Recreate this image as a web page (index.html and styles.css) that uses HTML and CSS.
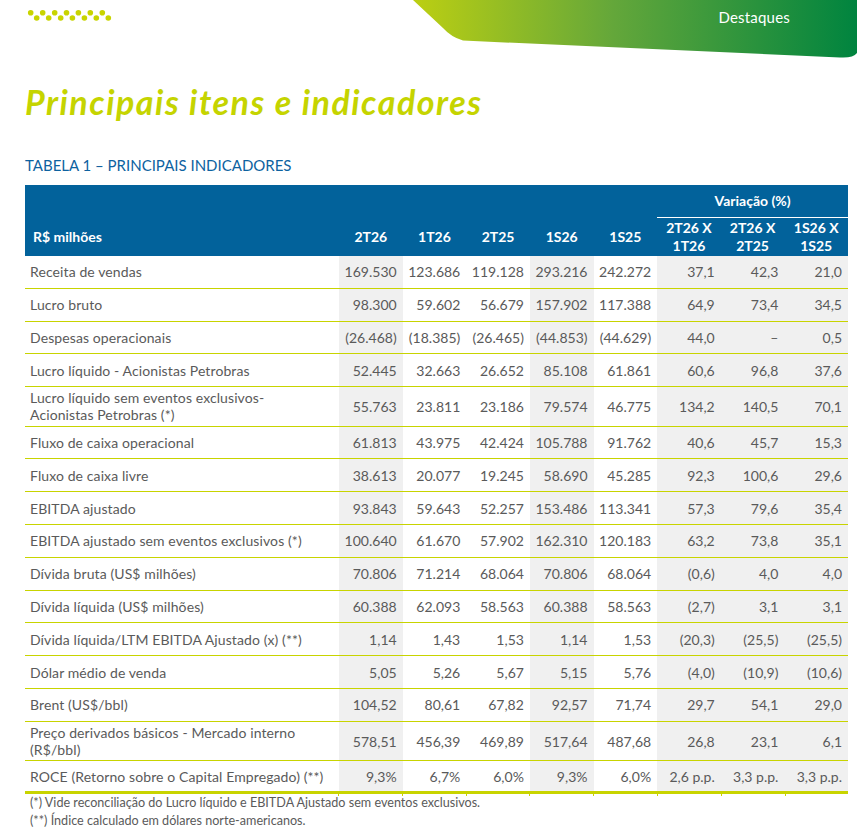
FILE: index.html
```html
<!DOCTYPE html>
<html lang="pt-BR">
<head>
<meta charset="utf-8">
<title>Principais itens e indicadores</title>
<link rel="stylesheet" href="styles.css">
</head>
<body>
<header class="top">
  <svg class="dots" width="112" height="24" viewBox="0 0 112 24" aria-hidden="true">
    <g fill="#c8d400">
      <circle cx="30.7" cy="12.7" r="2.8"/><circle cx="42.7" cy="12.7" r="2.8"/><circle cx="54.7" cy="12.7" r="2.8"/><circle cx="66.5" cy="12.7" r="2.8"/><circle cx="78.4" cy="12.7" r="2.8"/><circle cx="90.3" cy="12.7" r="2.8"/><circle cx="102.3" cy="12.7" r="2.8"/>
      <circle cx="36.7" cy="18" r="2.8"/><circle cx="48.7" cy="18" r="2.8"/><circle cx="60.7" cy="18" r="2.8"/><circle cx="72.4" cy="18" r="2.8"/><circle cx="84.4" cy="18" r="2.8"/><circle cx="96.3" cy="18" r="2.8"/><circle cx="108.3" cy="18" r="2.8"/>
    </g>
  </svg>
  <div class="banner">
    <svg class="banner-shape" width="444" height="60" viewBox="0 0 444 60" aria-hidden="true">
      <defs>
        <linearGradient id="bg" x1="0" y1="0" x2="1" y2="0">
          <stop offset="0" stop-color="#bccf12"/>
          <stop offset="0.45" stop-color="#64a73a"/>
          <stop offset="1" stop-color="#00843f"/>
        </linearGradient>
      </defs>
      <path d="M0,0 L30,28 Q38,37 50,40.6 L427,57.4 Q440,58.2 444,53 L444,0 Z" fill="url(#bg)"/>
    </svg>
    <span class="banner-label">Destaques</span>
  </div>
</header>
<main class="page">
  <h1 class="title">Principais itens e indicadores</h1>
  <h2 class="table-title">TABELA 1 – PRINCIPAIS INDICADORES</h2>
  <table class="ind">
    <colgroup>
      <col class="c-label"><col><col><col><col><col><col><col><col>
    </colgroup>
    <thead>
      <tr class="h1">
        <th rowspan="2" class="h-label">R$ milhões</th>
        <th rowspan="2" class="h-per">2T26</th>
        <th rowspan="2" class="h-per">1T26</th>
        <th rowspan="2" class="h-per">2T25</th>
        <th rowspan="2" class="h-per">1S26</th>
        <th rowspan="2" class="h-per">1S25</th>
        <th colspan="3" class="h-var">Variação (%)</th>
      </tr>
      <tr class="h2">
        <th>2T26 X<br>1T26</th>
        <th>2T26 X<br>2T25</th>
        <th>1S26 X<br>1S25</th>
      </tr>
    </thead>
    <tbody>
      <tr><td class="lbl">Receita de vendas</td><td class="g">169.530</td><td>123.686</td><td>119.128</td><td class="g">293.216</td><td>242.272</td><td class="g">37,1</td><td class="g">42,3</td><td class="g">21,0</td></tr>
      <tr><td class="lbl">Lucro bruto</td><td class="g">98.300</td><td>59.602</td><td>56.679</td><td class="g">157.902</td><td>117.388</td><td class="g">64,9</td><td class="g">73,4</td><td class="g">34,5</td></tr>
      <tr><td class="lbl">Despesas operacionais</td><td class="g">(26.468)</td><td>(18.385)</td><td>(26.465)</td><td class="g">(44.853)</td><td>(44.629)</td><td class="g">44,0</td><td class="g">–</td><td class="g">0,5</td></tr>
      <tr><td class="lbl">Lucro líquido - Acionistas Petrobras</td><td class="g">52.445</td><td>32.663</td><td>26.652</td><td class="g">85.108</td><td>61.861</td><td class="g">60,6</td><td class="g">96,8</td><td class="g">37,6</td></tr>
      <tr class="two"><td class="lbl">Lucro líquido sem eventos exclusivos-<br>Acionistas Petrobras (*)</td><td class="g">55.763</td><td>23.811</td><td>23.186</td><td class="g">79.574</td><td>46.775</td><td class="g">134,2</td><td class="g">140,5</td><td class="g">70,1</td></tr>
      <tr><td class="lbl">Fluxo de caixa operacional</td><td class="g">61.813</td><td>43.975</td><td>42.424</td><td class="g">105.788</td><td>91.762</td><td class="g">40,6</td><td class="g">45,7</td><td class="g">15,3</td></tr>
      <tr><td class="lbl">Fluxo de caixa livre</td><td class="g">38.613</td><td>20.077</td><td>19.245</td><td class="g">58.690</td><td>45.285</td><td class="g">92,3</td><td class="g">100,6</td><td class="g">29,6</td></tr>
      <tr><td class="lbl">EBITDA ajustado</td><td class="g">93.843</td><td>59.643</td><td>52.257</td><td class="g">153.486</td><td>113.341</td><td class="g">57,3</td><td class="g">79,6</td><td class="g">35,4</td></tr>
      <tr><td class="lbl">EBITDA ajustado sem eventos exclusivos (*)</td><td class="g">100.640</td><td>61.670</td><td>57.902</td><td class="g">162.310</td><td>120.183</td><td class="g">63,2</td><td class="g">73,8</td><td class="g">35,1</td></tr>
      <tr><td class="lbl">Dívida bruta (US$ milhões)</td><td class="g">70.806</td><td>71.214</td><td>68.064</td><td class="g">70.806</td><td>68.064</td><td class="g">(0,6)</td><td class="g">4,0</td><td class="g">4,0</td></tr>
      <tr><td class="lbl">Dívida líquida (US$ milhões)</td><td class="g">60.388</td><td>62.093</td><td>58.563</td><td class="g">60.388</td><td>58.563</td><td class="g">(2,7)</td><td class="g">3,1</td><td class="g">3,1</td></tr>
      <tr><td class="lbl">Dívida líquida/LTM EBITDA Ajustado (x) (**)</td><td class="g">1,14</td><td>1,43</td><td>1,53</td><td class="g">1,14</td><td>1,53</td><td class="g">(20,3)</td><td class="g">(25,5)</td><td class="g">(25,5)</td></tr>
      <tr><td class="lbl">Dólar médio de venda</td><td class="g">5,05</td><td>5,26</td><td>5,67</td><td class="g">5,15</td><td>5,76</td><td class="g">(4,0)</td><td class="g">(10,9)</td><td class="g">(10,6)</td></tr>
      <tr><td class="lbl">Brent (US$/bbl)</td><td class="g">104,52</td><td>80,61</td><td>67,82</td><td class="g">92,57</td><td>71,74</td><td class="g">29,7</td><td class="g">54,1</td><td class="g">29,0</td></tr>
      <tr class="two"><td class="lbl">Preço derivados básicos - Mercado interno<br>(R$/bbl)</td><td class="g">578,51</td><td>456,39</td><td>469,89</td><td class="g">517,64</td><td>487,68</td><td class="g">26,8</td><td class="g">23,1</td><td class="g">6,1</td></tr>
      <tr class="last"><td class="lbl">ROCE (Retorno sobre o Capital Empregado) (**)</td><td class="g">9,3%</td><td>6,7%</td><td>6,0%</td><td class="g">9,3%</td><td>6,0%</td><td class="g">2,6 p.p.</td><td class="g">3,3 p.p.</td><td class="g">3,3 p.p.</td></tr>
    </tbody>
  </table>
  <div class="ticks" aria-hidden="true"></div>
  <p class="notes">(*) Vide reconciliação do Lucro líquido e EBITDA Ajustado sem eventos exclusivos.<br>(**) Índice calculado em dólares norte-americanos.</p>
</main>
</body>
</html>
```

FILE: styles.css
```css
* { box-sizing: border-box; }

body {
  margin: 0;
  background: #ffffff;
  color: #5a5a5a;
  font-family: Lato, "Open Sans", "Liberation Sans", sans-serif;
}

.top {
  display: flex;
  justify-content: space-between;
  align-items: flex-start;
  height: 60px;
}

.dots { display: block; }

.banner {
  position: relative;
  width: 444px;
  height: 60px;
}

.banner-shape { display: block; }

.banner-label {
  position: absolute;
  top: 7px;
  right: 67px;
  color: #ffffff;
  font-size: 15px;
  line-height: 20px;
  letter-spacing: 0.2px;
}

.page {
  padding: 0 9px 0 25px;
}

.title {
  margin: 22px 0 0;
  color: #c5d400;
  font-size: 34px;
  line-height: 40px;
  font-style: italic;
  font-weight: 700;
  letter-spacing: 1.5px;
}

.table-title {
  margin: 33px 0 10px;
  color: #0d62a0;
  font-size: 15px;
  line-height: 20px;
  font-weight: 400;
}

.ind {
  width: 823px;
  border-collapse: separate;
  border-spacing: 0;
  table-layout: fixed;
}

.c-label { width: 314px; }

.ind thead th {
  background: #02629b;
  color: #ffffff;
  font-size: 14px;
  line-height: 18px;
  font-weight: 700;
  text-align: center;
  padding: 0;
  vertical-align: middle;
}

.h1 th { height: 32px; }
.h2 th { height: 39px; box-shadow: inset 0 1px 0 #ffffff; }

.ind thead th.h-label,
.ind thead th.h-per {
  vertical-align: bottom;
  padding-bottom: 10px;
}

.ind thead th.h-label {
  text-align: left;
  padding-left: 8px;
}

.ind tbody td {
  height: 32.8px;
  padding: 0 6px 0 0;
  border-bottom: 1px solid #c8d400;
  font-size: 14px;
  line-height: 17px;
  text-align: right;
  vertical-align: middle;
  white-space: nowrap;
}

.ind tbody td.lbl {
  text-align: left;
  padding-left: 5px;
  letter-spacing: 0.1px;
}

.ind tbody tr.two td { height: 39.5px; }

.ind tbody tr.last td {
  height: 33px;
  border-bottom: 3px solid #c8d400;
}

.ind tbody td.g { background: #f0f0f0; }

.ticks {
  width: 823px;
  height: 2px;
  background:
    linear-gradient(#c8d400, #c8d400) 313px 0 / 1px 2px no-repeat,
    linear-gradient(#c8d400, #c8d400) 377px 0 / 1px 2px no-repeat,
    linear-gradient(#c8d400, #c8d400) 441px 0 / 1px 2px no-repeat,
    linear-gradient(#c8d400, #c8d400) 504px 0 / 1px 2px no-repeat,
    linear-gradient(#c8d400, #c8d400) 568px 0 / 1px 2px no-repeat,
    linear-gradient(#c8d400, #c8d400) 632px 0 / 1px 2px no-repeat,
    linear-gradient(#c8d400, #c8d400) 696px 0 / 1px 2px no-repeat,
    linear-gradient(#c8d400, #c8d400) 760px 0 / 1px 2px no-repeat;
}

.notes {
  margin: -2px 0 0;
  padding-left: 5px;
  font-size: 12.6px;
  line-height: 18px;
  color: #5a5a5a;
}
```
